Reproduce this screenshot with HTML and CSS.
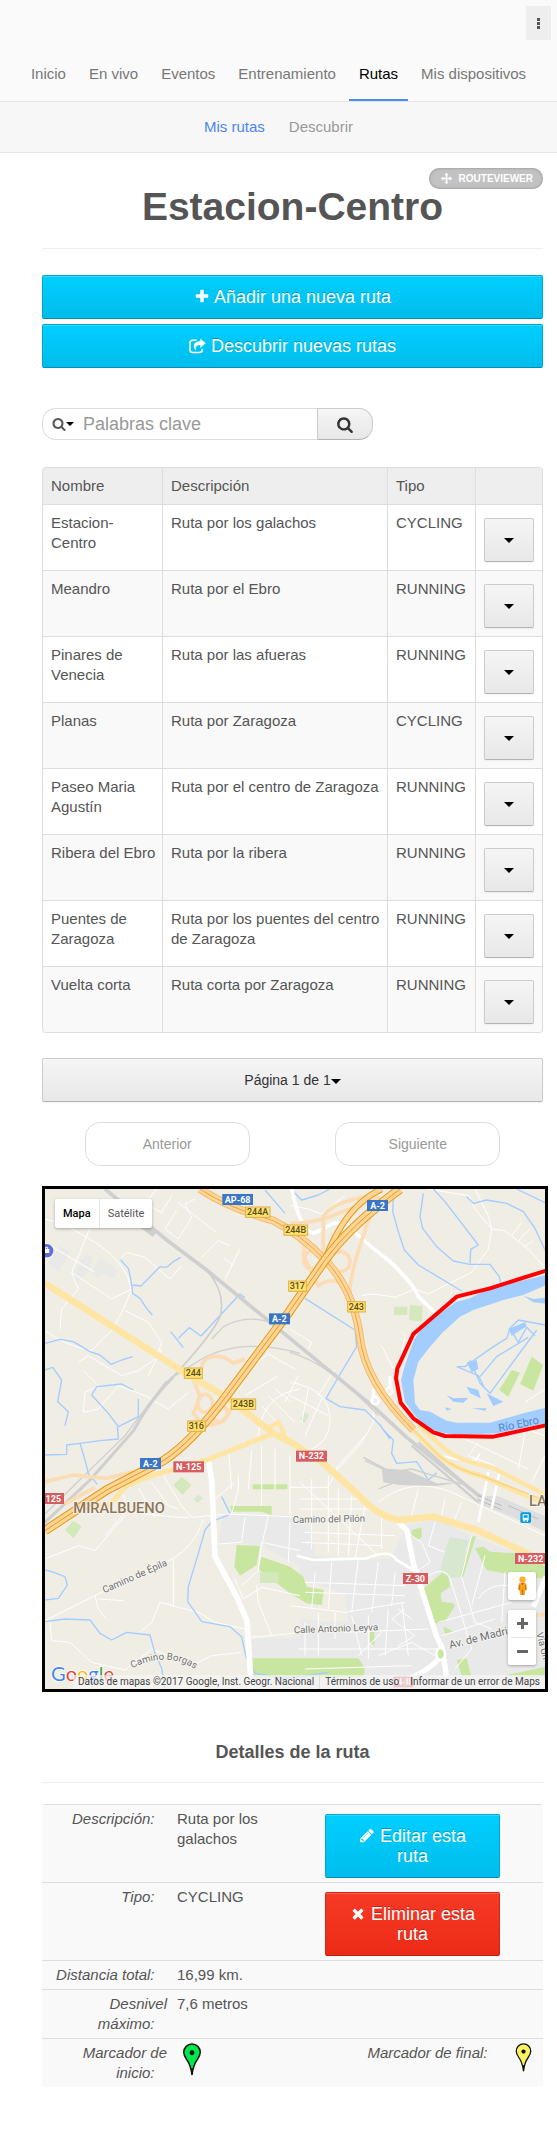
FILE: index.html
```html
<!DOCTYPE html>
<html lang="es">
<head>
<meta charset="utf-8">
<meta name="viewport" content="width=device-width, initial-scale=1">
<title>Estacion-Centro</title>
<link rel="stylesheet" href="styles.css">
</head>
<body>
<svg class="sprite" aria-hidden="true">
  <symbol id="plus" viewBox="0 0 1792 1792"><path d="M1600 736v192q0 40-28 68t-68 28h-416v416q0 40-28 68t-68 28h-192q-40 0-68-28t-28-68v-416h-416q-40 0-68-28t-28-68v-192q0-40 28-68t68-28h416v-416q0-40 28-68t68-28h192q40 0 68 28t28 68v416h416q40 0 68 28t28 68z"/></symbol>
  <symbol id="search" viewBox="0 0 1792 1792"><path d="M1216 832q0-185-131.500-316.500t-316.500-131.500-316.500 131.500-131.500 316.500 131.500 316.500 316.500 131.500 316.500-131.500 131.500-316.500zm512 832q0 52-38 90t-90 38q-54 0-90-38l-343-342q-179 124-399 124-143 0-273.500-55.500t-225-150-150-225-55.500-273.500 55.500-273.500 150-225 225-150 273.500-55.500 273.500 55.500 225 150 150 225 55.500 273.500q0 220-124 399l343 343q37 37 37 90z"/></symbol>
  <symbol id="times" viewBox="0 0 1792 1792"><path d="M1490 1322q0 40-28 68l-136 136q-28 28-68 28t-68-28l-294-294-294 294q-28 28-68 28t-68-28l-136-136q-28-28-28-68t28-68l294-294-294-294q-28-28-28-68t28-68l136-136q28-28 68-28t68 28l294 294 294-294q28-28 68-28t68 28l136 136q28 28 28 68t-28 68l-294 294 294 294q28 28 28 68z"/></symbol>
  <symbol id="pencil" viewBox="0 0 1792 1792"><path d="M491 1536l91-91-235-235-91 91v107h128v128h107zm523-928q0-22-22-22-10 0-17 7l-542 542q-7 7-7 17 0 22 22 22 10 0 17-7l542-542q7-7 7-17zm-54-192l416 416-832 832h-416v-416zm683 96q0 53-37 90l-166 166-416-416 166-165q36-38 90-38 53 0 91 38l235 234q37 39 37 91z"/></symbol>
  <symbol id="arrows" viewBox="0 0 1792 1792"><path d="M1792 896q0 26-19 45l-256 256q-19 19-45 19t-45-19-19-45v-128h-384v384h128q26 0 45 19t19 45-19 45l-256 256q-19 19-45 19t-45-19l-256-256q-19-19-19-45t19-45 45-19h128v-384h-384v128q0 26-19 45t-45 19-45-19l-256-256q-19-19-19-45t19-45l256-256q19-19 45-19t45 19 19 45v128h384v-384h-128q-26 0-45-19t-19-45 19-45l256-256q19-19 45-19t45 19l256 256q19 19 19 45t-19 45-45 19h-128v384h384v-128q0-26 19-45t45-19 45 19l256 256q19 19 19 45z"/></symbol>
  <symbol id="share" viewBox="0 0 18 16"><path d="M8 2H4a3 3 0 0 0-3 3v7a3 3 0 0 0 3 3h7a3 3 0 0 0 3-3v-1" fill="none" stroke="currentColor" stroke-width="1.600"/><path d="M12 0l5.600 5L12 10V7C8 7 6.500 8.500 7.500 13 3 8.500 5 3 12 3z"/></symbol>
  <symbol id="pin" viewBox="0 0 20 34"><path d="M10 1a8.500 8.500 0 0 0-8.500 8.500c0 3 1.200 5 3 7.500C7.500 21 9 25 10 33c1-8 2.500-12 5.500-16 1.800-2.500 3-4.500 3-7.500A8.500 8.500 0 0 0 10 1z" stroke="#111" stroke-width="1.500"/><path d="M9.200 26h1.600L10 34z" fill="#111"/><circle cx="10" cy="10" r="2.500" fill="#111"/></symbol>
</svg>

<header class="top">
  <button class="more" type="button" aria-label="Más opciones"><i></i><i></i><i></i></button>
  <nav class="nav">
    <a href="#">Inicio</a><a href="#">En vivo</a><a href="#">Eventos</a><a href="#">Entrenamiento</a><a href="#" class="active">Rutas</a><a href="#">Mis dispositivos</a>
  </nav>
</header>
<nav class="subnav"><a href="#" class="active">Mis rutas</a><a href="#">Descubrir</a></nav>

<main class="content">
  <div class="title">
    <h1>Estacion-Centro</h1>
    <span class="badge"><svg><use href="#arrows"/></svg>ROUTEVIEWER</span>
  </div>

  <div class="actions">
    <button class="btn primary" type="button"><svg class="ico"><use href="#plus"/></svg> Añadir una nueva ruta</button>
    <button class="btn primary" type="button"><svg class="ico wide"><use href="#share"/></svg> Descubrir nuevas rutas</button>
  </div>

  <form class="search">
    <div class="field">
      <button class="scope" type="button" aria-label="Filtro"><svg><use href="#search"/></svg><i class="caret"></i></button>
      <input type="text" placeholder="Palabras clave" aria-label="Palabras clave">
    </div>
    <button class="go" type="button" aria-label="Buscar"><svg><use href="#search"/></svg></button>
  </form>

  <table class="routes">
    <colgroup><col class="c-name"><col class="c-desc"><col class="c-type"><col></colgroup>
    <thead><tr><th>Nombre</th><th>Descripción</th><th>Tipo</th><th></th></tr></thead>
    <tbody>
      <tr><td>Estacion-Centro</td><td>Ruta por los galachos</td><td>CYCLING</td><td><button class="drop" type="button" aria-label="Opciones"><i class="caret"></i></button></td></tr>
      <tr><td>Meandro</td><td>Ruta por el Ebro</td><td>RUNNING</td><td><button class="drop" type="button" aria-label="Opciones"><i class="caret"></i></button></td></tr>
      <tr><td>Pinares de Venecia</td><td>Ruta por las afueras</td><td>RUNNING</td><td><button class="drop" type="button" aria-label="Opciones"><i class="caret"></i></button></td></tr>
      <tr><td>Planas</td><td>Ruta por Zaragoza</td><td>CYCLING</td><td><button class="drop" type="button" aria-label="Opciones"><i class="caret"></i></button></td></tr>
      <tr><td>Paseo Maria Agustín</td><td>Ruta por el centro de Zaragoza</td><td>RUNNING</td><td><button class="drop" type="button" aria-label="Opciones"><i class="caret"></i></button></td></tr>
      <tr><td>Ribera del Ebro</td><td>Ruta por la ribera</td><td>RUNNING</td><td><button class="drop" type="button" aria-label="Opciones"><i class="caret"></i></button></td></tr>
      <tr><td>Puentes de Zaragoza</td><td>Ruta por los puentes del centro de Zaragoza</td><td>RUNNING</td><td><button class="drop" type="button" aria-label="Opciones"><i class="caret"></i></button></td></tr>
      <tr><td>Vuelta corta</td><td>Ruta corta por Zaragoza</td><td>RUNNING</td><td><button class="drop" type="button" aria-label="Opciones"><i class="caret"></i></button></td></tr>
    </tbody>
  </table>

  <button class="page-select" type="button">Página 1 de 1<i class="caret"></i></button>
  <div class="pager"><button type="button">Anterior</button><button type="button">Siguiente</button></div>

  <div class="map">
    <svg class="canvas" viewBox="0 0 1500 1500" role="img" aria-label="Mapa de la ruta">
      <rect width="1500" height="1500" fill="#f0ede5"/>
      <!-- built-up areas -->
      <g fill="#e9e9e9">
        <path d="M535 973L765 980 800 1013 810 1100 940 1113 1040 1100 1085 1010 1175 990 1300 1050 1500 1120V1500H620V1348L765 1343 765 1130 645 1068 520 1063z"/>
        <path d="M10 223L45 170 75 190 40 248zM80 260L120 198 142 205 135 245 95 280zM140 250L165 207 222 245 205 268 170 253 155 265z" fill="#e9e9e7"/>
      </g>
      <path d="M640 1110L765 1170 900 1215 910 1300 760 1290V1348L620 1348 590 1240zM790 1000L920 1010 1050 990 1080 1010 1030 1110 900 1113 815 1100z" fill="#f0ede5"/>
      <!-- parks -->
      <g fill="#c9e6a1">
        <path d="M622 1408H940L960 1438 955 1463H622zM575 1068L645 1071 635 1128 585 1160 568 1133zM650 1103L735 1133 775 1163 785 1193 837 1203 830 1248 785 1243 735 1213 640 1140zM555 951H680V978L650 968H560zM623 886H727V901H623z"/>
        <path d="M1130 1203L1190 1153 1210 1158 1215 1193 1187 1213 1190 1238 1225 1243 1230 1250 1200 1298 1165 1305zM1195 1313L1227 1328 1200 1335zM1235 1413L1265 1408 1278 1460H1250zM1280 1043L1293 1041 1255 1163 1245 1158zM1290 1078L1315 1073 1335 1088 1415 1093 1500 1123V1170L1375 1153 1325 1143zM1385 1458L1500 1433V1463H1385zM1100 1023L1130 1015V1043L1120 1053 1100 1043zM975 1323H988V1370L975 1360z"/>
        <path d="M1460 503L1495 528 1465 605 1425 585zM1400 543L1425 551 1390 623 1362 603z"/>
        <path d="M1047 353H1087V378H1047zM1095 348L1133 351 1130 398 1092 393zM385 888L410 863 440 888 412 918zM60 1023L85 995 110 1013 85 1048zM645 1150H700V1182H645z" fill="#d3e9bb"/>
        <path d="M1215 1045L1270 1053 1245 1163 1215 1168 1185 1148 1205 1068zM445 930L460 917 473 927 458 942zM765 690L780 670 792 678 780 703z" fill="#d8e8d0"/>
      </g>
      <!-- minor streets -->
      <g fill="none" stroke="#fff" stroke-width="3" stroke-linejoin="round">
        <path d="M0 90Q60 100 165 170 250 230 258 300 250 340 200 425 170 450 140 485 60 470 0 425M150 80L80 250 100 300 50 360 45 420M335 0L300 45 350 70 380 20M395 65L360 120 400 150 440 85 420 45 450 30M400 40L500 120 515 130M470 205L520 155 555 170M585 180L540 270M230 205L245 190 300 205 375 270 410 230M535 205L565 230M240 365L310 400 350 460 340 490M100 520L130 500 230 560 280 545 330 510M115 545L160 590 120 610 115 670 160 660 220 590 300 620 370 660 430 610M350 480L310 560M600 545L670 495 750 540M600 620L700 560M640 760Q640 620 765 600M690 600L740 640M670 620L750 700M650 650L730 740M0 160L150 250M80 250L200 330 260 300"/>
        <path d="M735 580Q860 600 855 700 850 760 800 780M735 620L850 680M760 560L720 640M790 600L770 700M830 630L780 740M870 540L820 620M735 420L800 460 790 480M950 320Q980 310 1050 325L1110 300 1150 315 1280 250 1330 180 1340 120 1380 125 1450 180 1495 230M1340 120L1290 60 1270 20 1150 0M1400 140L1430 100M1420 155L1455 120M1435 175L1465 155M1010 470L1045 540M1060 540L1080 440 1070 430M735 50L790 60 830 75 900 20M1290 0L1330 80 1340 120M985 600V700L950 760 880 840M1500 600L1440 640"/>
        <path d="M355 860L410 950 440 985 550 975 670 980 765 985M230 905L250 970 400 985 430 985M280 895L330 985M320 880L370 950 400 960M180 1040L240 970M0 1110L100 1070 150 1085 240 980M0 1295L160 1215 385 1108Q450 1070 475 990M385 1110V1250L345 1240 320 1300 285 1330M150 1220L160 1260 185 1290M160 1230L235 1235M15 1300L20 1355 75 1360 140 1420 240 1443 320 1380 440 1430 500 1400 590 1390M380 1250L460 1270 510 1300 600 1320M580 860V900L560 975M550 780L560 900M620 785L610 900M650 770V950M690 780V900M735 800V980M510 930L570 880M600 985L590 1060 520 1065M650 1070L670 980M590 1190L640 1145 650 1060 765 1085M570 1170L595 1230 650 1195 765 1220M635 1190L640 1240 680 1340 765 1330M620 1345L680 1340M735 1000L730 1120"/>
        <path d="M765 880L1000 1100M850 860V1090M800 870V1080M765 930H960M765 960H1000M780 1030L1050 1040M770 1060L1010 1070M880 900V1100M920 920L910 1100M960 950L930 1110M1010 980V1080M735 895H850L880 830 960 740M1000 940Q1100 860 1220 910L1500 1040M1200 930L1190 980M1250 940L1230 990M1120 900L1100 980M1160 720L1260 750 1450 840M1300 760L1270 800 1350 830M1440 730L1420 840M1380 700L1500 740M1460 880L1500 800M1085 1030L1130 1060 1155 1120 1110 1150M1170 1000L1150 1070 1200 1090M1250 1165L1290 1300 1340 1320M1300 1230Q1330 1180 1400 1190M1215 1168L1250 1280 1280 1380 1230 1440M1150 1160Q1200 1130 1215 1168M1180 1300L1400 1240M1190 1340L1350 1290M1280 1040L1250 1160M1320 1100L1280 1250M1380 1150L1370 1300M735 1250L900 1270 1080 1240M810 1150L800 1260M860 1120L850 1260M940 1110L920 1270M1000 1120L980 1270M1050 1150L1040 1250M780 1180L1080 1190M780 1210L1080 1220M780 1300V1400M820 1270V1400M870 1270V1350M920 1280L950 1400M970 1280V1410M1030 1260L1020 1400M1070 1240L1090 1400M760 1380H1180M900 1330L1150 1320M1040 1290L1110 1340 1060 1370M940 1400L1010 1330M1060 1260L1100 1290M1040 1290L1080 1260M1000 1400L1100 1360 1170 1400M780 1440L1100 1430"/>
      </g>
      <!-- streams -->
      <g fill="none" stroke="#a3ccff" stroke-width="4" stroke-linejoin="round">
        <path d="M227 213L250 238 258 273 263 313 285 328 305 358 322 378M263 288L288 291 345 233 365 235 385 218 407 205M377 428L415 476M400 448L433 416 468 441 585 315 600 326M0 463L45 451 85 458 135 488 165 498 198 526 230 513 263 503M0 543L23 535 50 573 38 638 70 668 60 710M280 630V683L220 713 190 673 140 618 155 593 230 585 265 603M217 713L220 750 165 755 105 763M660 3L720 73"/>
        <path d="M1045 23L1043 68 1060 128 1078 183 1120 228 1250 306M1135 13L1125 83 1133 118 1175 173 1225 216 1275 226H1335L1363 263 1370 298M1165 0L1200 38 1250 103 1300 168 1277 181 1275 223M1265 23L1285 43 1325 33 1385 43 1435 68 1470 118 1500 183M1415 0L1500 41M780 328L930 423 935 473 875 573 843 628 885 653 960 663 1005 708 1035 750M740 3L770 33 820 18 855 0"/>
        <path d="M1235 533H1260L1345 473 1385 448 1395 418 1420 393 1500 408M1475 423L1335 613 1305 583 1275 513M1305 563L1355 503 1450 445M1395 418L1420 460 1445 415 1470 440M1235 533L1300 560 1320 600"/>
        <path d="M0 798L65 796V768L105 763 120 813 130 853 157 886M0 1143L20 1148 60 1163 67 1188 40 1228 0 1233M0 1298L60 1290 135 1293 165 1333 200 1353 245 1330 315 1338 330 1393 350 1438 360 1500M555 973L530 923M550 978L500 998 480 1023 460 1093 430 1193 428 1238 470 1298 555 1313 590 1343 603 1403 630 1453 725 1468 850 1450M1015 723L1045 753 1040 793 1055 823 1115 818 1150 873 1175 851"/>
      </g>
      <!-- river -->
      <g fill="#a3ccff">
        <path d="M1503 258L1440 273 1335 298 1275 328 1235 338 1135 408 1107 453 1080 528 1068 573 1080 638 1105 673 1135 708 1175 728 1235 738 1355 733 1503 703V656L1435 673 1335 701H1235L1205 695 1155 668 1125 663 1110 643 1105 573 1120 518 1155 473 1195 428 1245 383 1285 363 1375 333 1435 318 1503 288z"/>
        <path d="M1435 320L1465 330 1503 326V344L1465 340zM1205 618L1225 628 1270 626 1255 641 1225 638zM1265 593L1300 603 1307 628 1275 613zM1280 658H1325L1320 665zM1325 613L1375 638 1345 651zM1265 520L1295 513 1300 540 1280 550zM1390 420L1440 400 1445 412 1400 440zM1200 655L1220 660 1205 665z"/>
      </g>
      <!-- railways -->
      <g fill="none" stroke="#cfcfcf">
        <path d="M180 0L365 153 485 243 765 473 985 653 1085 745 1295 915 1380 965" stroke-width="11"/>
        <path d="M250 75L330 135" stroke-width="22"/>
        <path d="M485 243Q545 313 525 383 505 433 385 563" stroke-width="5"/>
        <path d="M385 563Q315 633 265 726L135 873 0 1000" stroke-width="9"/>
        <path d="M365 575L240 740 0 975M685 403Q605 373 535 413L500 450M765 493Q585 443 465 513L385 563M735 490Q850 520 1000 680" stroke-width="4"/>
        <path d="M1120 760L1310 930M1100 770L1300 940" stroke-width="7"/>
        <path d="M955 805L1040 850 1100 840 1250 885M1000 900L1050 880M960 815L1100 880" stroke-width="4"/>
        <path d="M1010 838L1085 843 1175 883 1245 880 1175 891 1065 888 1015 880z" fill="#d2d2d2" stroke="none"/>
        <path d="M1295 923L1355 920 1503 983V1028L1375 973 1300 945z" fill="#dedede" stroke="none"/>
        <path d="M1300 920L1370 950M1298 932L1370 962M1390 950L1480 990" stroke="#bdbdbd" stroke-width="3"/>
      </g>
      <!-- white avenues -->
      <g fill="none" stroke="#fff" stroke-linejoin="round">
        <path d="M740 0Q765 123 805 133 835 123 865 103L905 103Q925 133 1035 218 1105 283 1120 323L1170 370" stroke-width="11"/>
        <path d="M490 813L500 873 510 1103 575 1223 605 1293 617 1463V1500" stroke-width="17"/>
        <path d="M1060 1000L1085 1023 1105 1123 1175 1343 1190 1373 1205 1463M1503 1163L1465 1253M1095 1468Q1155 1443 1190 1400" stroke-width="16"/>
        <path d="M755 1100L805 1113 965 1108Q1035 1078 1055 1113L1105 1143M1300 1000L1330 850M1340 960L1365 840" stroke-width="8"/>
        <circle cx="990" cy="635" r="11" stroke-width="7"/><circle cx="1032" cy="607" r="10" stroke-width="7"/><path d="M985 600V625M1035 560V595" stroke-width="10"/>
        <path d="M1165 790Q1200 810 1290 815L1305 795" stroke-width="6"/>
      </g>
      <ellipse cx="1187" cy="1395" rx="13" ry="18" fill="#c9e6a1" stroke="#fff" stroke-width="8"/>
      <!-- interchanges -->
      <g fill="none" stroke="#fcdcb4" stroke-width="11">
        <circle cx="885" cy="218" r="30"/><circle cx="803" cy="213" r="27"/>
        <path d="M835 203V83Q855 43 965 23M915 318Q910 260 975 83M735 103Q795 103 855 83L1005 23M780 160L775 200 820 290Q875 250 915 318"/>
        <path d="M460 563L475 518Q515 483 565 523L600 510M445 573L465 623 445 673 475 708Q545 713 560 650"/>
        <ellipse cx="480" cy="643" rx="22" ry="27"/><ellipse cx="525" cy="673" rx="22" ry="25"/>
        <path d="M0 878L85 858 185 868 285 843M150 895L60 945M1475 1280L1500 1275"/>
      </g>
      <!-- trunk roads -->
      <g fill="none" stroke="#ffe5a3" stroke-linejoin="round">
        <path d="M0 283L425 555 545 625 685 733 735 758 835 823 935 913Q1000 985 1065 993L1165 983 1295 1023 1425 1083 1503 1123" stroke-width="20"/>
        <path d="M685 733L485 813 325 858 245 890 195 945 120 960" stroke-width="15"/>
        <path d="M1085 705L1185 803Q1230 840 1315 863L1503 945" stroke-width="15"/>
        <path d="M1120 710L1200 780Q1240 815 1340 835L1503 918M660 720L700 700 730 760" stroke-width="13"/>
        <path d="M1105 723L1185 803Q1230 840 1315 863L1503 935" stroke="#efc15c" stroke-width="2"/>
      </g>
      <!-- motorways -->
      <g fill="none" stroke-linejoin="round">
        <path d="M465 0Q545 55 685 95 765 135 840 213 925 300 945 445 960 580 1105 723" stroke="#eeb766" stroke-width="24"/>
        <path d="M465 0Q545 55 685 95 765 135 840 213 925 300 945 445 960 580 1105 723" stroke="#ffd596" stroke-width="19"/>
        <path d="M465 0Q545 55 685 95 765 135 840 213 925 300 945 445 960 580 1105 723" stroke="#e6a64d" stroke-width="3"/>
        <path d="M1010 0Q900 50 840 213" stroke="#e39a1b" stroke-width="19"/>
        <path d="M1010 0Q900 50 840 213" stroke="#ffd596" stroke-width="13"/>
        <path d="M1065 0Q915 110 840 213L735 365 545 620Q440 760 355 815L185 903 0 1025" stroke="#e39a1b" stroke-width="28"/>
        <path d="M1065 0Q915 110 840 213L735 365 545 620Q440 760 355 815L185 903 0 1025" stroke="#ffd596" stroke-width="22"/>
        <path d="M1065 0Q915 110 840 213L735 365 545 620Q440 760 355 815L185 903 0 1025" stroke="#e39a1b" stroke-width="3"/>
      </g>
      <!-- route -->
      <path d="M1503 245L1335 298 1235 323 1105 435 1057 538 1053 568 1067 641 1105 688 1165 730 1200 741 1345 743 1503 709" fill="none" stroke="#f00" stroke-width="12" stroke-linejoin="round"/>
      <!-- road shields -->
      <g class="shield blue">
        <rect x="532" y="15" width="92" height="33"/><text x="578" y="41">AP-68</text>
        <rect x="966" y="33" width="63" height="33"/><text x="998" y="59">A-2</text>
        <rect x="672" y="373" width="63" height="33"/><text x="703" y="399">A-2</text>
        <rect x="285" y="807" width="63" height="33"/><text x="316" y="833">A-2</text>
      </g>
      <g class="shield red">
        <rect x="385" y="817" width="92" height="33"/><text x="431" y="843">N-125</text>
        <rect x="-30" y="912" width="87" height="33"/><text x="25" y="938">125</text>
        <rect x="753" y="785" width="93" height="33"/><text x="799" y="811">N-232</text>
        <rect x="1410" y="1092" width="93" height="33"/><text x="1457" y="1118">N-232</text>
        <rect x="1074" y="1152" width="75" height="33"/><text x="1111" y="1178">Z-30</text>
        <rect x="1045" y="1463" width="60" height="32"/><text x="1075" y="1489">N-II</text>
      </g>
      <g class="shield yellow">
        <rect x="602" y="54" width="73" height="31"/><text x="638" y="79">244A</text>
        <rect x="717" y="108" width="71" height="31"/><text x="752" y="133">244B</text>
        <rect x="731" y="276" width="53" height="31"/><text x="757" y="301">317</text>
        <rect x="908" y="338" width="53" height="31"/><text x="934" y="363">243</text>
        <rect x="418" y="537" width="54" height="31"/><text x="445" y="562">244</text>
        <rect x="559" y="630" width="73" height="31"/><text x="595" y="655">243B</text>
        <rect x="428" y="696" width="53" height="31"/><text x="454" y="721">316</text>
      </g>
      <!-- place names -->
      <g class="place">
        <text class="town" x="85" y="972">MIRALBUENO</text>
        <text class="town" x="1452" y="951">LA</text>
        <text transform="translate(178 1213) rotate(-24)">Camino de Épila</text>
        <text transform="translate(743 1002) rotate(-1)">Camino del Pilón</text>
        <text transform="translate(747 1333) rotate(-2)">Calle Antonio Leyva</text>
        <text class="avenue" transform="translate(1215 1379) rotate(-14)">Av. de Madrid</text>
        <text transform="translate(1474 1333) rotate(76)">Vía Un</text>
        <path id="borgas" d="M262 1438Q365 1385 450 1440" fill="none" stroke="none"/>
        <text><textPath href="#borgas">Camino Borgas</textPath></text>
        <text class="water" transform="translate(1363 729) rotate(-12)">Río Ebro</text>
      </g>
      <rect x="1426" y="970" width="32" height="32" rx="5" fill="#039be5"/>
      <path d="M1433 976h18v18h-18zM1435 994h4v4h-4zM1445 994h4v4h-4z" fill="#fff"/><path d="M1436 979h12v7h-12zM1436 989h3v2h-3zM1445 989h3v2h-3z" fill="#039be5"/>
      <circle cx="5" cy="185" r="20" fill="#5c6bd8"/><path d="M-5 180h18v12H-5z" fill="#fff"/><path d="M1 180v-5h7v5" fill="none" stroke="#fff" stroke-width="3"/>
      <text class="logo" x="18" y="1477"><tspan fill="#4285f4">G</tspan><tspan fill="#ea4335">o</tspan><tspan fill="#fbbc05">o</tspan><tspan fill="#4285f4">g</tspan><tspan fill="#34a853">l</tspan><tspan fill="#ea4335">e</tspan></text>
    </svg>
    <div class="map-type"><button type="button" class="on">Mapa</button><button type="button">Satélite</button></div>
    <div class="map-tools">
      <button type="button" class="pegman" aria-label="Street View"><svg viewBox="0 0 14 22"><circle cx="7" cy="4" r="3.500" fill="#fbb034"/><path d="M3 8h8l1 7-2 1-.5 5h-5L4 16l-2-1z" fill="#f5a11c"/><path d="M5 7.500h4L7 10z" fill="#d9532c"/><path d="M7 15v6M3.800 10l-.3 5M10.200 10l.3 5" stroke="#b87310" fill="none"/></svg></button>
      <div class="zoom"><button type="button" aria-label="Acercar"><i class="bar"></i><i class="bar up"></i></button><button type="button" aria-label="Alejar"><i class="bar"></i></button></div>
    </div>
    <div class="map-legal"><span>Datos de mapas ©2017 Google, Inst. Geogr. Nacional</span><a href="#">Términos de uso</a><a href="#">Informar de un error de Maps</a></div>
  </div>

  <h2>Detalles de la ruta</h2>
  <table class="details">
    <colgroup><col class="d-label"><col><col class="d-action"><col class="d-end"></colgroup>
    <tbody>
      <tr><th>Descripción:&nbsp;&nbsp;&nbsp;</th><td>Ruta por los galachos</td><td class="act"><button class="btn primary" type="button"><svg class="ico"><use href="#pencil"/></svg> Editar esta ruta</button></td><td></td></tr>
      <tr><th>Tipo:&nbsp;&nbsp;&nbsp;</th><td>CYCLING</td><td class="act"><button class="btn danger" type="button"><svg class="ico"><use href="#times"/></svg> Eliminar esta ruta</button></td><td></td></tr>
      <tr><th>Distancia total:&nbsp;&nbsp;&nbsp;</th><td>16,99 km.</td><td></td><td></td></tr>
      <tr><th>Desnivel máximo:&nbsp;&nbsp;&nbsp;</th><td>7,6 metros</td><td></td><td></td></tr>
      <tr><th>Marcador de inicio:&nbsp;&nbsp;&nbsp;</th><td><svg class="pin green"><use href="#pin"/></svg></td><th>Marcador de final:&nbsp;&nbsp;&nbsp;</th><td><svg class="pin yellow"><use href="#pin"/></svg></td></tr>
    </tbody>
  </table>
</main>
</body>
</html>
```
FILE: styles.css
```css
* { box-sizing: border-box; }
body { margin: 0; background: #fff; color: #555; font: 15px/20px "Liberation Sans", Arial, sans-serif; }
button, input { font: inherit; color: inherit; margin: 0; padding: 0; border: 0; background: none; }
a { color: inherit; text-decoration: none; }
.sprite { display: none; }
.caret { display: inline-block; border: 5px solid transparent; border-top-color: #000; border-bottom: 0; vertical-align: middle; }

.top { display: flex; flex-direction: column; background: #fafafa; border-bottom: 1px solid #e5e5e5; }
.more { align-self: flex-end; display: flex; flex-direction: column; align-items: center; justify-content: center; gap: 1px; width: 25px; height: 34px; margin: 6px 6px 0 0; background: #eee; }
.more i { width: 3px; height: 3px; background: #555; }
.nav { display: flex; justify-content: center; gap: 3px; padding-top: 10px; color: #777; }
.nav a { padding: 14px 10px 15px; border-bottom: 2px solid transparent; white-space: nowrap; }
.nav .active { color: #000; border-bottom-color: #4a8df0; }
.subnav { display: flex; justify-content: center; gap: 24px; padding: 15px 0; background: #f7f7f7; border-bottom: 1px solid #e5e5e5; color: #999; }
.subnav .active { color: #4a86f0; }

.content { padding: 0 14px 60px 42px; }
.title { position: relative; padding: 34px 0 21px; border-bottom: 1px solid #eee; text-align: center; }
h1 { margin: 0; font-size: 39px; line-height: 40px; }
.badge { position: absolute; top: 15px; right: 0; display: flex; align-items: center; gap: 7px; height: 21px; padding: 0 10px 0 12px; border-radius: 11px; background: #c2c2c2; box-shadow: inset 0 0 3px #888; color: #fff; font-size: 10px; font-weight: bold; }
.badge svg { width: 11px; height: 11px; fill: currentColor; }

.actions { display: flex; flex-direction: column; gap: 5px; margin-top: 26px; }
.btn { padding: 11px 19px; border: 1px solid; border-radius: 2px; color: #fff; font-size: 18px; line-height: 20px; text-shadow: 0 -1px 0 rgba(0, 0, 0, .25); box-shadow: inset 0 1px 0 rgba(255, 255, 255, .2); }
.primary { background: linear-gradient(#00cfff, #00bdec); border-color: #00a9d4 #00a9d4 #008fb3; }
.danger { background: linear-gradient(#f63a26, #ec2b16); border-color: #cf2a17 #cf2a17 #b3220f; }
.ico { width: 16px; height: 17px; vertical-align: -2px; fill: currentColor; }
.ico.wide { width: 17px; height: 16px; }

.search { display: flex; align-items: flex-start; margin-top: 40px; height: 32px; }
.field { display: flex; align-items: center; width: 275px; height: 32px; border: 1px solid #ddd; border-right: 0; border-radius: 14px 0 0 14px; }
.scope { display: flex; align-items: center; margin-left: 9px; width: 22px; }
.scope svg { width: 14px; height: 14px; fill: #555; }
.scope .caret { border-width: 4px 4px 0; }
.field input { flex: 1; min-width: 0; margin-left: 9px; font-size: 18px; outline: 0; }
.field input::placeholder { color: #999; opacity: 1; }
.go { display: flex; align-items: center; justify-content: center; width: 56px; height: 32px; border: 1px solid #ccc; border-bottom-color: #b3b3b3; border-radius: 0 14px 14px 0; background: linear-gradient(#f5f5f5, #e8e8e8); }
.go svg { width: 18px; height: 17px; fill: #333; }

table { width: 100%; border-collapse: separate; border-spacing: 0; table-layout: fixed; }
th, td { font-weight: normal; text-align: left; vertical-align: top; }
.routes { margin-top: 27px; border: 1px solid #ddd; border-width: 0 1px 1px 0; border-radius: 4px; overflow: hidden; }
.routes th, .routes td { padding: 8px 6px 8px 8px; border: 1px solid #ddd; border-width: 1px 0 0 1px; }
.routes th { background: #eee; }
.routes tr:nth-child(even) td { background: #f9f9f9; }
.routes th:first-child { border-top-left-radius: 4px; }
.routes th:last-child { border-top-right-radius: 4px; }
.routes tr:last-child td:first-child { border-bottom-left-radius: 4px; }
.c-name { width: 120px; }
.c-desc { width: 225px; }
.c-type { width: 88px; }
.drop { display: flex; align-items: center; justify-content: center; width: 50px; height: 44px; margin-top: 5px; }
.drop, .page-select { border: 1px solid #ccc; border-bottom-color: #b3b3b3; border-radius: 2px; background: linear-gradient(#f5f5f5, #e8e8e8); box-shadow: 0 1px 2px rgba(0, 0, 0, .05); }
.page-select { display: block; width: 100%; height: 44px; margin-top: 25px; color: #333; font-size: 14px; }
.pager { display: flex; justify-content: space-around; margin: 20px 0; }
.pager button { width: 33%; height: 44px; border: 1px solid #ddd; border-radius: 15px; color: #999; font-size: 14px; }

.map { position: relative; margin-right: -5px; border: 3px solid #000; overflow: hidden; font-family: Roboto, sans-serif; }
.canvas { display: block; width: 100%; }
.shield text { font-size: 27px; font-weight: 700; text-anchor: middle; fill: #fff; }
.blue rect { fill: #3a76c6; }
.red rect { fill: #d65c60; }
.yellow rect { fill: #ffe168; stroke: #dcb04a; stroke-width: 3; }
.yellow text { fill: #5c4d2a; font-weight: 500; }
.place text { font-size: 29px; fill: #6e6e6e; paint-order: stroke; stroke: #f7f6f2; stroke-width: 5px; }
.place .town { font-size: 44px; font-weight: 500; fill: #8d7558; }
.place .avenue { font-size: 33px; }
.place .water { font-size: 33px; fill: #5288c8; stroke: none; }
.logo { font: 60px Lato, sans-serif; paint-order: stroke; stroke: #fff; stroke-width: 5px; }
.map-type { position: absolute; top: 10px; left: 10px; display: flex; height: 29px; border-radius: 2px; background: #fff; box-shadow: 0 1px 3px rgba(0, 0, 0, .3); color: #565656; font-size: 11px; }
.map-type button { padding: 0 8px; }
.map-type .on { color: #000; font-weight: 500; border-right: 1px solid #e6e6e6; }
.map-tools { position: absolute; right: 9px; bottom: 24px; display: flex; flex-direction: column; gap: 10px; }
.pegman, .zoom { display: flex; width: 28px; border-radius: 2px; background: #fff; box-shadow: 0 1px 3px rgba(0, 0, 0, .3); }
.pegman { height: 28px; align-items: center; justify-content: center; }
.pegman svg { width: 13px; height: 20px; }
.zoom { flex-direction: column; }
.zoom button { display: grid; place-items: center; height: 27px; margin: 0 3px; }
.zoom button + button { border-top: 1px solid #e6e6e6; height: 28px; }
.bar { grid-area: 1 / 1; width: 11px; height: 3px; background: #666; }
.bar.up { transform: rotate(90deg); }
.map-legal { position: absolute; right: 0; bottom: 0; display: flex; height: 14px; background: rgba(245, 245, 245, .7); color: #444; font-size: 10px; line-height: 14px; white-space: nowrap; }
.map-legal > * { padding: 0 5px; }
.map-legal a { border-left: 1px solid #ddd; }

h2 { margin: 50px 0 21px; padding-bottom: 20px; border-bottom: 1px solid #eee; font-size: 18px; line-height: 20px; text-align: center; }
.details { border-radius: 4px; overflow: hidden; background: #f9f9f9; }
.details th, .details td { padding: 4px 5px; border-top: 1px solid #ddd; }
.details th { text-align: right; font-style: italic; }
.details .act { text-align: right; }
.details .btn { width: 175px; margin-top: 5px; vertical-align: top; }
.d-label { width: 130px; }
.d-action { width: 210px; }
.d-end { width: 38px; }
.pin { display: block; margin-left: 5px; width: 20px; height: 33px; }
.pin.yellow { width: 17px; height: 29px; fill: #fbf25f; }
.pin.green { fill: #00e64d; }
```
